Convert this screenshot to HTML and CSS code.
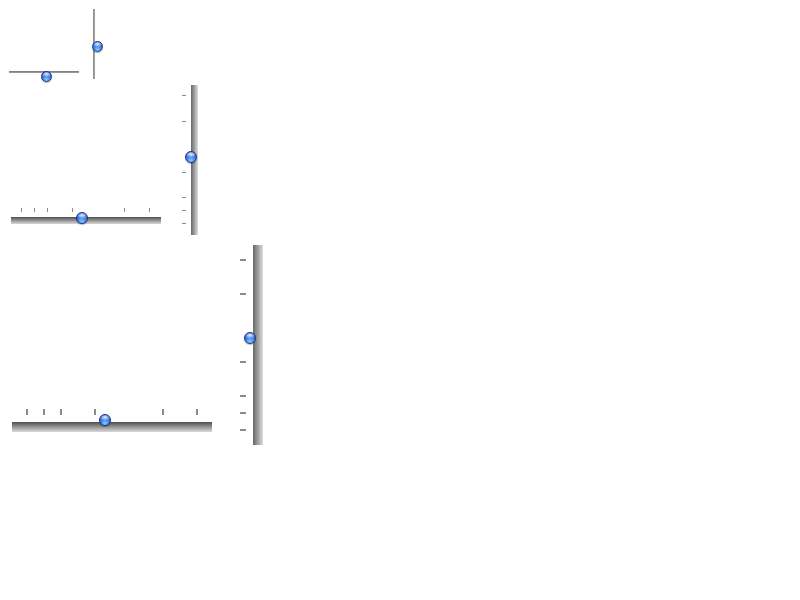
FILE: index.html
```html
<!DOCTYPE html>
<html lang="en">
<head>
  <meta charset="UTF-8">
  <title>Sliders</title>
  <link rel="stylesheet" href="styles.css">
</head>
<body>
  <div class="row row-mini">
    <div class="hslider mini">
      <div class="track"></div>
      <div class="thumb" style="left:32px;top:0"></div>
    </div>
    <div class="vslider mini">
      <div class="track"></div>
      <div class="thumb" style="left:-1px;top:32px"></div>
    </div>
  </div>

  <div class="row row-small">
    <div class="hslider small">
      <div class="ticks">
        <span class="tick" style="left:10px"></span>
        <span class="tick" style="left:23px"></span>
        <span class="tick" style="left:36px"></span>
        <span class="tick" style="left:61px"></span>
        <span class="tick" style="left:113px"></span>
        <span class="tick" style="left:138px"></span>
      </div>
      <div class="track"></div>
      <div class="thumb" style="left:65px;top:4px"></div>
    </div>
    <div class="vslider small">
      <div class="ticks">
        <span class="tick" style="top:10px"></span>
        <span class="tick" style="top:36px"></span>
        <span class="tick" style="top:87px"></span>
        <span class="tick" style="top:112px"></span>
        <span class="tick" style="top:125px"></span>
        <span class="tick" style="top:138px"></span>
      </div>
      <div class="track"></div>
      <div class="thumb" style="left:3px;top:66px"></div>
    </div>
  </div>

  <div class="row row-large">
    <div class="hslider large">
      <div class="ticks">
        <span class="tick" style="left:14px"></span>
        <span class="tick" style="left:31px"></span>
        <span class="tick" style="left:48px"></span>
        <span class="tick" style="left:82px"></span>
        <span class="tick" style="left:150px"></span>
        <span class="tick" style="left:184px"></span>
      </div>
      <div class="track"></div>
      <div class="thumb" style="left:87px;top:5px"></div>
    </div>
    <div class="vslider large">
      <div class="ticks">
        <span class="tick" style="top:14px"></span>
        <span class="tick" style="top:48px"></span>
        <span class="tick" style="top:116px"></span>
        <span class="tick" style="top:150px"></span>
        <span class="tick" style="top:167px"></span>
        <span class="tick" style="top:184px"></span>
      </div>
      <div class="track"></div>
      <div class="thumb" style="left:4px;top:87px"></div>
    </div>
  </div>
</body>
</html>
```

FILE: styles.css
```css
body {
  margin: 0;
  background: #fff;
  font-family: "Liberation Sans", Arial, sans-serif;
}
.row {
  display: flex;
  align-items: flex-start;
}

/* generic slider parts */
.hslider, .vslider {
  position: relative;
  display: flex;
}
.hslider { flex-direction: column; }
.vslider { flex-direction: row; }
.ticks {
  position: relative;
  flex: none;
}
.tick {
  position: absolute;
  background: #8c8c8c;
}
.thumb {
  position: absolute;
  width: 12px;
  height: 12px;
  box-sizing: border-box;
  border-radius: 50%;
  border: 1px solid #1c318a;
  background:
    radial-gradient(ellipse 60% 35% at 50% 22%, rgba(255,255,255,0.9), rgba(255,255,255,0) 100%),
    radial-gradient(circle at 50% 85%, #8cc8ff 0, #3a7fe8 45%, #1d52c2 85%);
  box-shadow: 0 1px 1px rgba(0,0,0,0.3);
}
.hslider .track {
  background: linear-gradient(to bottom, #4e4e4e, #9c9c9c 55%, #d8d8d8);
}
.vslider .track {
  background: linear-gradient(to right, #666, #a6a6a6 55%, #dedede);
}

/* row 1 – mini sliders, no ticks */
.row-mini {
  padding: 9px 0 0 9px;
}
.hslider.mini {
  width: 70px;
  margin-top: 62px;
}
.hslider.mini .track {
  height: 2px;
  background: linear-gradient(to bottom, #777, #a0a0a0);
}
.vslider.mini {
  width: 2px;
  height: 70px;
  margin-left: 14px;
}
.vslider.mini .track {
  width: 2px;
  height: 70px;
  background: linear-gradient(to right, #888, #a8a8a8);
}
.mini .thumb {
  width: 11px;
  height: 11px;
}

/* row 2 – small sliders */
.row-small {
  margin-top: 6px;
  padding-left: 11px;
  height: 150px;
}
.hslider.small {
  width: 150px;
  align-self: flex-end;
  margin-bottom: 11px;
}
.hslider.small .ticks { height: 4px; margin-bottom: 5px; }
.hslider.small .tick { top: 0; width: 1px; height: 4px; }
.hslider.small .track { height: 7px; }
.vslider.small {
  height: 150px;
  margin-left: 21px;
}
.vslider.small .ticks { width: 4px; margin-right: 5px; }
.vslider.small .tick { left: 0; width: 4px; height: 1px; }
.vslider.small .track { width: 7px; }

/* row 3 – regular sliders */
.row-large {
  margin-top: 10px;
  padding-left: 12px;
  height: 200px;
}
.hslider.large {
  width: 200px;
  align-self: flex-end;
  margin-bottom: 13px;
}
.hslider.large .ticks { height: 6px; margin-bottom: 7px; }
.hslider.large .tick { top: 0; width: 2px; height: 6px; }
.hslider.large .track { height: 10px; }
.vslider.large {
  height: 200px;
  margin-left: 28px;
}
.vslider.large .ticks { width: 6px; margin-right: 7px; }
.vslider.large .tick { left: 0; width: 6px; height: 2px; }
.vslider.large .track { width: 10px; }
```
